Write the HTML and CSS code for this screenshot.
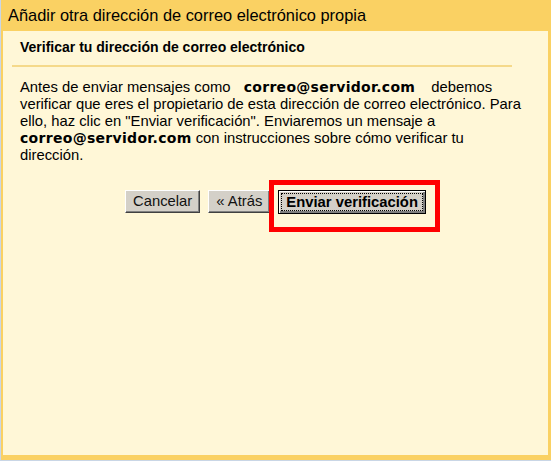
FILE: index.html
```html
<!DOCTYPE html>
<html lang="es">
<head>
<meta charset="utf-8">
<title>Añadir otra dirección de correo electrónico propia</title>
<link rel="stylesheet" href="styles.css">
</head>
<body>
<div class="dialog">
  <div class="title">Añadir otra dirección de correo electrónico propia</div>
  <div class="panel">
    <h2 class="heading">Verificar tu dirección de correo electrónico</h2>
    <p class="msg">Antes de enviar mensajes como <b class="email email-first">correo@servidor.com</b> debemos verificar que eres el propietario de esta dirección de correo electrónico. Para ello, haz clic en "Enviar verificación". Enviaremos un mensaje a <b class="email">correo@servidor.com</b> con instrucciones sobre cómo verificar tu dirección.</p>
    <div class="actions">
      <button class="btn" type="button">Cancelar</button>
      <button class="btn" type="button">« Atrás</button>
      <span class="primary-wrap">
        <button class="btn btn-primary" type="button"><span class="focus">Enviar verificación</span></button>
        <span class="highlight"></span>
      </span>
    </div>
  </div>
</div>
</body>
</html>
```

FILE: styles.css
```css
html, body {
  margin: 0;
  padding: 0;
}
body {
  background: #c9d6e6;
  width: 551px;
  height: 461px;
  overflow: hidden;
  font-family: "Liberation Sans", Arial, sans-serif;
  color: #000;
}
.dialog {
  margin-left: 1px;
  width: 550px;
  height: 460px;
  background: #fad163;
  display: flex;
  flex-direction: column;
}
.title {
  height: 31px;
  box-sizing: border-box;
  padding: 6px 0 0 7px;
  font-size: 16.4px;
  line-height: 19px;
  color: #000;
}
.panel {
  margin: 0 3px 5px 2px;
  flex: 1;
  background: #fff7d7;
}
.heading {
  margin: 0 0 0 9px;
  width: 500px;
  box-sizing: border-box;
  padding: 8px 0 9px 8px;
  font-size: 14px;
  line-height: 17px;
  font-weight: bold;
  border-bottom: 2px solid #f5d98a;
}
.msg {
  margin: 0 0 0 17px;
  padding-top: 12px;
  width: 508px;
  font-size: 14.8px;
  line-height: 17px;
  color: #000;
}
.email {
  font-family: "DejaVu Sans", Verdana, sans-serif;
  font-weight: bold;
  font-size: 14px;
  letter-spacing: 0.3px;
  line-height: 12px;
}
.email-first {
  padding: 0 12px 0 9px;
}
.actions {
  margin-top: 26px;
  display: flex;
  justify-content: center;
  align-items: flex-start;
  gap: 8px;
}
.btn {
  font-family: "Liberation Sans", Arial, sans-serif;
  font-size: 14.8px;
  height: 23px;
  line-height: 17px;
  padding: 0 7px;
  margin: 0;
  background: #d4d0c8;
  color: #111;
  border: 1px solid;
  border-color: #ffffff #404040 #404040 #ffffff;
  box-shadow: inset -1px -1px 0 #808080;
}
.primary-wrap {
  position: relative;
  display: inline-flex;
}
.btn-primary {
  font-weight: bold;
  height: 24px;
  padding: 2px;
  border: 1px solid #000;
  box-shadow: inset 1px 1px 0 #ffffff, inset -2px -2px 0 #808080;
  color: #000;
}
.focus {
  display: block;
  padding: 0 4px;
  border: 1px dotted #000;
  line-height: 16px;
}
.highlight {
  position: absolute;
  left: -9px;
  top: -10px;
  width: calc(100% + 13px);
  height: 42px;
  border: 5px solid #ff0000;
  pointer-events: none;
}
```
